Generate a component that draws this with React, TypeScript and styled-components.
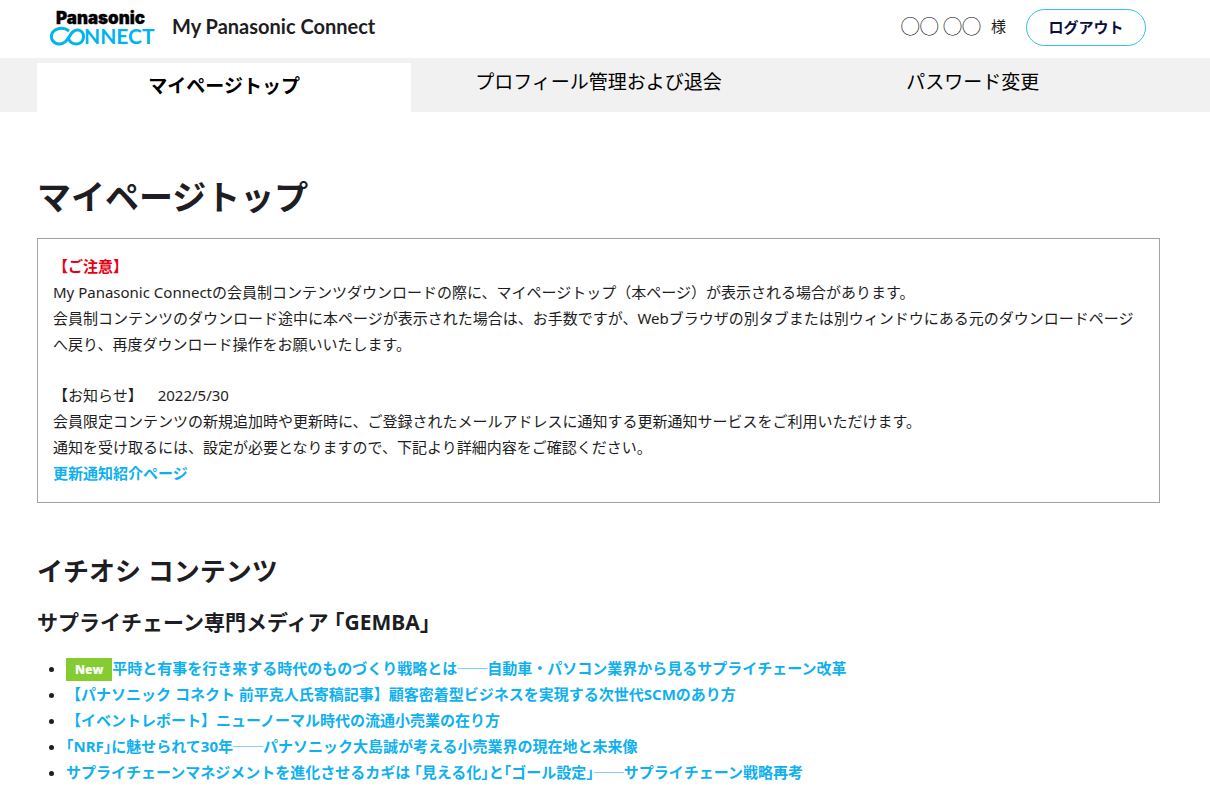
import React from "react";
import styled, { createGlobalStyle } from "styled-components";

const GlobalStyle = createGlobalStyle`
  * { box-sizing: border-box; }
  body {
    margin: 0;
    background: #fff;
    color: #1d1d23;
    font-family: "Noto Sans", "Noto Sans CJK JP", sans-serif;
    font-size: 15px;
    line-height: 26px;
    text-spacing-trim: space-all;
  }
`;

const Header = styled.header`
  display: flex;
  align-items: center;
  height: 58px;
  padding: 0 64px 4px 49px;
`;

const LogoLink = styled.a`
  display: block;
  margin-right: 16px;
  line-height: 0;
`;

const SiteName = styled.span`
  padding-bottom: 2px;
  font-family: "Lato", "Noto Sans CJK JP", sans-serif;
  font-size: 20px;
  font-weight: 700;
`;

const Account = styled.div`
  display: flex;
  align-items: center;
  gap: 20px;
  margin-left: auto;
`;

const UserName = styled.span`
  display: flex;
  align-items: center;
  gap: 10px;
  padding-bottom: 2px;
`;

const MaskedName = styled.span`
  font-family: "Noto Sans CJK JP", sans-serif;
  font-size: 19px;
  color: #000;
`;

const LogoutButton = styled.button`
  width: 120px;
  height: 37px;
  padding: 0 0 2px;
  border: 1px solid #35bdf0;
  border-radius: 19px;
  background: #fff;
  color: #0a0f3c;
  font: 700 15px "Noto Sans CJK JP", sans-serif;
  cursor: pointer;
`;

const TabBar = styled.nav`
  display: grid;
  grid-template-columns: repeat(3, 1fr);
  height: 54px;
  padding: 5px 50px 0 37px;
  background: #f1f1f1;
`;

const Tab = styled.a<{ $active?: boolean }>`
  padding-top: ${({ $active }) => ($active ? 10 : 6)}px;
  background: ${({ $active }) => ($active ? "#fff" : "transparent")};
  color: #000;
  font-size: 19px;
  font-weight: ${({ $active }) => ($active ? 700 : 400)};
  text-align: center;
  text-decoration: none;
`;

const Main = styled.main`
  padding: 60px 50px 10px 37px;
`;

const PageTitle = styled.h1`
  margin: 0 0 16px;
  font-size: 34px;
  line-height: 50px;
`;

const Notice = styled.section`
  margin-bottom: 48px;
  padding: 14px 15px 16px;
  border: 1px solid #a3a3a3;
`;

const Paragraph = styled.p`
  margin: 0;
  & + & { margin-top: 25px; }
`;

const Warning = styled.strong`
  color: #e60012;
`;

const SectionTitle = styled.h2`
  margin: 0 0 16px;
  font-size: 26px;
  line-height: 40px;
`;

const MediaTitle = styled.h3`
  margin: 0 0 18px;
  font-size: 21px;
  line-height: 30px;
`;

const TextLink = styled.a`
  color: #0fb0f0;
  font-weight: 700;
  text-decoration: none;
`;

const ArticleList = styled.ul`
  margin: 0;
  padding-left: 29px;
`;

const ArticleItem = styled.li`
  height: 26px;
`;

const Badge = styled.span`
  display: inline-block;
  height: 23px;
  padding: 0 9px;
  background: #84cc30;
  color: #fff;
  font: 800 12px/23px "Open Sans", sans-serif;
  vertical-align: middle;
`;

const articles = [
  { title: "平時と有事を行き来する時代のものづくり戦略とは──自動車・パソコン業界から見るサプライチェーン改革", isNew: true },
  { title: "【パナソニック コネクト 前平克人氏寄稿記事】顧客密着型ビジネスを実現する次世代SCMのあり方" },
  { title: "【イベントレポート】ニューノーマル時代の流通小売業の在り方" },
  { title: "｢NRF｣に魅せられて30年──パナソニック大島誠が考える小売業界の現在地と未来像" },
  { title: "サプライチェーンマネジメントを進化させるカギは ｢見える化｣と｢ゴール設定｣──サプライチェーン戦略再考" },
];

function Logo() {
  return (
    <svg width="107" height="44" viewBox="0 0 107 44" role="img" aria-label="Panasonic Connect">
      <text x="7" y="19" fontFamily="Inter, sans-serif" fontSize="17" fontWeight="900" fill="#000" stroke="#000" strokeWidth="0.3">Panasonic</text>
      <path
        d="M20 26C14.500 21.500 6 23 3.300 28C.5 33.500 4.500 39 10.500 39C16 39 18.500 34.500 21 30.500C23 27 25.500 25 28.500 25C32.500 25 34.500 28 34.500 32C34.500 36 31.500 39 27.500 39C23.500 39 20.800 37 19.500 33.500"
        fill="none"
        stroke="#00b4f0"
        strokeWidth="3"
      />
      <text x="35" y="39" fontFamily="Lato, sans-serif" fontSize="21" fontWeight="700" fill="#00b4f0">NNECT</text>
    </svg>
  );
}

export default function App() {
  return (
    <>
      <GlobalStyle />
      <Header>
        <LogoLink href="#"><Logo /></LogoLink>
        <SiteName>My Panasonic Connect</SiteName>
        <Account>
          <UserName><MaskedName>◯◯ ◯◯</MaskedName>様</UserName>
          <LogoutButton type="button">ログアウト</LogoutButton>
        </Account>
      </Header>
      <TabBar>
        <Tab href="#" $active aria-current="page">マイページトップ</Tab>
        <Tab href="#">プロフィール管理および退会</Tab>
        <Tab href="#">パスワード変更</Tab>
      </TabBar>
      <Main>
        <PageTitle>マイページトップ</PageTitle>
        <Notice>
          <Paragraph>
            <Warning>【ご注意】</Warning><br />
            My Panasonic Connectの会員制コンテンツダウンロードの際に、マイページトップ（本ページ）が表示される場合があります。<br />
            会員制コンテンツのダウンロード途中に本ページが表示された場合は、お手数ですが、Webブラウザの別タブまたは別ウィンドウにある元のダウンロードページへ戻り、再度ダウンロード操作をお願いいたします。
          </Paragraph>
          <Paragraph>
            【お知らせ】　2022/5/30<br />
            会員限定コンテンツの新規追加時や更新時に、ご登録されたメールアドレスに通知する更新通知サービスをご利用いただけます。<br />
            通知を受け取るには、設定が必要となりますので、下記より詳細内容をご確認ください。<br />
            <TextLink href="#">更新通知紹介ページ</TextLink>
          </Paragraph>
        </Notice>
        <SectionTitle>イチオシ コンテンツ</SectionTitle>
        <MediaTitle>サプライチェーン専門メディア ｢GEMBA｣</MediaTitle>
        <ArticleList>
          {articles.map(({ title, isNew }) => (
            <ArticleItem key={title}>
              {isNew && <Badge>New</Badge>}
              <TextLink href="#">{title}</TextLink>
            </ArticleItem>
          ))}
        </ArticleList>
      </Main>
    </>
  );
}
